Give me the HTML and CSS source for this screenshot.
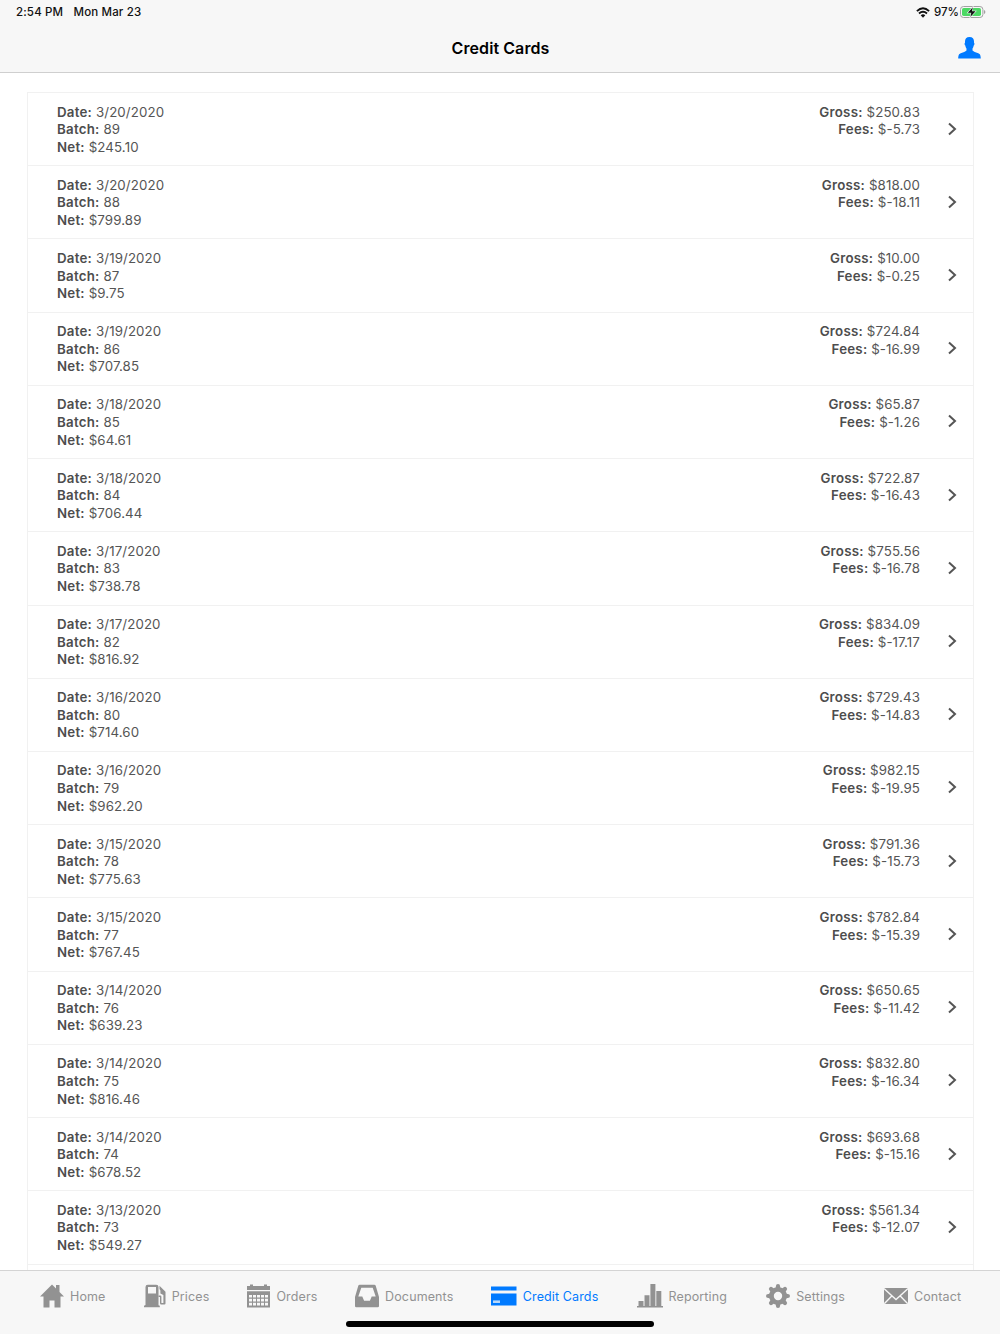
FILE: index.html
```html
<!DOCTYPE html>
<html lang="en">
<head>
<meta charset="utf-8">
<title>Credit Cards</title>
<link rel="stylesheet" href="styles.css">
</head>
<body>
<div class="app">
  <header class="header">
    <div class="status">
      <span class="time">2:54 PM</span><span class="day">Mon Mar 23</span>
      <svg class="wifi" width="14" height="11" viewBox="0 0 14 11"><g fill="none" stroke="#111" stroke-width="1.9"><path d="M.9 4.1Q7-1.5 13.1 4.1"/><path d="M3 6.5Q7 3 11 6.5"/></g><path d="M4.7 8.3Q7 6.4 9.3 8.3L7 10.7z" fill="#111"/></svg>
      <span class="percent">97%</span>
      <svg class="battery" width="26" height="12" viewBox="0 0 26 12"><rect x=".5" y=".5" width="22.4" height="11" rx="3" fill="none" stroke="#a2a2a2"/><rect x="2" y="2" width="19" height="8" rx="1.7" fill="#4cd964"/><path d="M24 4v4q1.4-.6 1.4-2T24 4" fill="#a2a2a2"/><path d="M12.8 1.2 7.8 6.8h3.5l-1 4.2 5.3-5.8h-3.6z" fill="#111" stroke="#f7f7f7" stroke-width="1.1" paint-order="stroke"/></svg>
    </div>
    <div class="nav">
      <h1 class="title">Credit Cards</h1>
      <svg class="user" width="23" height="22" viewBox="0 0 23 22"><path fill="#007aff" d="M11.500 0C14.700 0 16 1.800 16 4.500v1.200c.7.3.5 2.300-.3 2.800-.3 1.500-.6 2.300-1.200 3v2c1.200 1.300 3.200 1.700 5.100 2.500 2.200.8 3.100 1.700 3.200 5.500H.2c.1-3.800 1-4.700 3.200-5.500 1.900-.8 3.900-1.200 5.100-2.500v-2c-.6-.7-.9-1.500-1.200-3C6.500 8 6.300 6 7 5.700V4.500C7 1.800 8.300 0 11.500 0z"/></svg>
    </div>
  </header>
  <main class="content"><div class="list" id="list"></div></main>
  <footer class="footer">
    <nav class="tabs">
      <a class="tab home"><svg width="24" height="24" viewBox="0 0 24 24"><path d="M12 .5 16 4.500V1h3.500v7L24 12.500h-3.500V23.500h-6v-7h-5v7h-6v-11H0z"/></svg><span>Home</span></a>
      <a class="tab prices"><svg width="22" height="24" viewBox="0 0 22 24"><path fill-rule="evenodd" d="M1.500 3q0-2.300 2.300-2.300h8.400q2.300 0 2.300 2.300v18.200l1.300.6v1.500H0v-1.500l1.500-.8zM4 3v6.500h8V3z"/><path d="M14.500 11.500h1.700q1.200 0 1.200 1.200v6.300h2V11l-3-1.500V6.500L15.500 5V1.800l6 5.900v11.800q0 1-1 1h-3.300q-1.200 0-1.200-1.200V13h-1.500z"/></svg><span>Prices</span></a>
      <a class="tab orders"><svg width="23" height="24" viewBox="0 0 23 24"><path fill-rule="evenodd" d="M0 2h3V.5h3V2h11V.5h3V2h3v4H0zM0 7.200h23v16.300H0zM2 11v2.500h3V11zm4 0v2.500h3V11zm4 0v2.500h3V11zm4 0v2.500h3V11zm4 0v2.500h3V11zM2 14.800v2.700h3v-2.700zm4 0v2.700h3v-2.700zm4 0v2.700h3v-2.700zm4 0v2.700h3v-2.700zm4 0v2.700h3v-2.700zM2 18.800v2.700h3v-2.700zm4 0v2.700h3v-2.700zm4 0v2.700h3v-2.700zm4 0v2.700h3v-2.700zm4 0v2.700h3v-2.700z"/></svg><span>Orders</span></a>
      <a class="tab documents"><svg width="24" height="24" viewBox="0 0 24 24"><path fill-rule="evenodd" d="M4.800 .8h14.400q1.300 0 1.600 1.300L24 13v9q0 1.300-1.300 1.300H1.300Q0 23.300 0 22v-9L3.200 2.100Q3.500 .8 4.800 .8zM6.300 3.800 3.300 12.500h4l1.800 4.300h5.800l1.800-4.300h4L17.700 3.800z"/></svg><span>Documents</span></a>
      <a class="tab cards active"><svg width="26" height="24" viewBox="0 0 26 24"><path fill-rule="evenodd" d="M0 2.500h25.500v4H0zM0 9.500h25.500v12H0zM2 16.500v2.500h7v-2.500z"/><path d="M2 16.500h7V19H2z" opacity=".25"/></svg><span>Credit Cards</span></a>
      <a class="tab reporting"><svg width="26" height="24" viewBox="0 0 26 24"><path d="M0 22h26v1.600H0zM1.500 17h5v5h-5zm6-5.800h5V22h-5zM13.400 0h5v22h-5zM19.300 7h5v15h-5z"/></svg><span>Reporting</span></a>
      <a class="tab settings"><svg width="24" height="24" viewBox="0 0 24 24"><defs><path id="tooth" d="M9 5.500Q9.900 4 9.900 2.200 9.900 0 12 0t2.100 2.200Q14.100 4 15 5.500z"/></defs><use href="#tooth"/><use href="#tooth" transform="rotate(45 12 12)"/><use href="#tooth" transform="rotate(90 12 12)"/><use href="#tooth" transform="rotate(135 12 12)"/><use href="#tooth" transform="rotate(180 12 12)"/><use href="#tooth" transform="rotate(225 12 12)"/><use href="#tooth" transform="rotate(270 12 12)"/><use href="#tooth" transform="rotate(315 12 12)"/><circle cx="12" cy="12" r="6.600" fill="none" stroke="#929292" stroke-width="4.800"/></svg><span>Settings</span></a>
      <a class="tab contact"><svg width="24" height="24" viewBox="0 0 24 24"><path d="M0 4h24v16H0z"/><path d="m0 4.500 12 11 12-11M.3 19.700 8 11.800m15.700 7.900L16 11.800" fill="none" stroke="#f7f7f7" stroke-width="1.300"/></svg><span>Contact</span></a>
    </nav>
    <div class="home-indicator"></div>
  </footer>
</div>
<script src="app.js"></script>
</body>
</html>
```
FILE: styles.css
```css
* { box-sizing: border-box; }
body { margin: 0; background: #fff; font-family: Inter, "Liberation Sans", sans-serif; }
.app { height: 1334px; display: flex; flex-direction: column; overflow: hidden; }
.header { height: 73px; flex: none; background: #f7f7f7; border-bottom: 1px solid #cfcfcf; }
.status { height: 24px; padding: 0 15px 0 16px; display: flex; align-items: center; font-size: 11.5px; font-weight: 500; letter-spacing: .15px; color: #111; }
.time { width: 57.500px; }
.wifi { margin-left: auto; }
.percent { width: 24px; margin: 0 2px 0 4px; letter-spacing: -.1px; white-space: nowrap; }
.battery { margin-right: -1px; }
.nav { height: 48px; display: grid; grid-template-columns: 1fr auto 1fr; align-items: center; padding: 0 19.500px 0 20.500px; }
.title { grid-column: 2; margin: 0; font-size: 16px; font-weight: 600; letter-spacing: .08px; color: #000; }
.user { justify-self: end; }
.content { flex: 1; min-height: 0; overflow: hidden; padding: 19px 26.500px 0; }
.list { border: 1px solid #f1f1f1; border-bottom: 0; min-height: 1200px; }
.row { height: 73.220px; padding: 10.500px 16px 0 29.500px; display: flex; border-bottom: 1px solid #f1f1f1; font-size: 13.300px; line-height: 17.600px; color: #555; letter-spacing: .1px; }
.row b { font-weight: 600; color: #4d4d4d; letter-spacing: .24px; }
.amounts { margin-left: auto; text-align: right; }
.chevron { margin: 18px 0 0 27.500px; width: 9px; height: 14px; fill: none; stroke: #555; stroke-width: 2; }
.footer { height: 64px; flex: none; background: #f7f7f7; border-top: 1px solid #d4d4d4; }
.tabs { height: 50px; display: flex; justify-content: space-between; padding: 0 40px; color: #929292; font-size: 12.500px; letter-spacing: .12px; }
.tab { display: flex; align-items: center; gap: 6px; white-space: nowrap; }
.tab svg { fill: currentColor; flex: none; }
.tab span { padding-top: 1px; }
.home { width: 64px; }
.prices { width: 64px; }
.orders { width: 68px; }
.documents { width: 96px; }
.cards { width: 106px; }
.reporting { width: 90px; }
.settings { width: 78px; }
.contact { width: 76px; }
.active { color: #007aff; }
.home-indicator { width: 308px; height: 6px; margin: 0 auto; border-radius: 3px; background: #000; }
```
FILE: app.js
```javascript
const batches = [
  ["3/20/2020", 89, "245.10", "250.83", "-5.73"],
  ["3/20/2020", 88, "799.89", "818.00", "-18.11"],
  ["3/19/2020", 87, "9.75", "10.00", "-0.25"],
  ["3/19/2020", 86, "707.85", "724.84", "-16.99"],
  ["3/18/2020", 85, "64.61", "65.87", "-1.26"],
  ["3/18/2020", 84, "706.44", "722.87", "-16.43"],
  ["3/17/2020", 83, "738.78", "755.56", "-16.78"],
  ["3/17/2020", 82, "816.92", "834.09", "-17.17"],
  ["3/16/2020", 80, "714.60", "729.43", "-14.83"],
  ["3/16/2020", 79, "962.20", "982.15", "-19.95"],
  ["3/15/2020", 78, "775.63", "791.36", "-15.73"],
  ["3/15/2020", 77, "767.45", "782.84", "-15.39"],
  ["3/14/2020", 76, "639.23", "650.65", "-11.42"],
  ["3/14/2020", 75, "816.46", "832.80", "-16.34"],
  ["3/14/2020", 74, "678.52", "693.68", "-15.16"],
  ["3/13/2020", 73, "549.27", "561.34", "-12.07"]
];
document.getElementById("list").innerHTML = batches.map(([date, batch, net, gross, fees]) => `
  <article class="row">
    <div><div><b>Date:</b> ${date}</div><div><b>Batch:</b> ${batch}</div><div><b>Net:</b> $${net}</div></div>
    <div class="amounts"><div><b>Gross:</b> $${gross}</div><div><b>Fees:</b> $${fees}</div></div>
    <svg class="chevron" viewBox="0 0 9 14"><path d="m1 1.500 6 5.500-6 5.500"/></svg>
  </article>`).join("");
```
